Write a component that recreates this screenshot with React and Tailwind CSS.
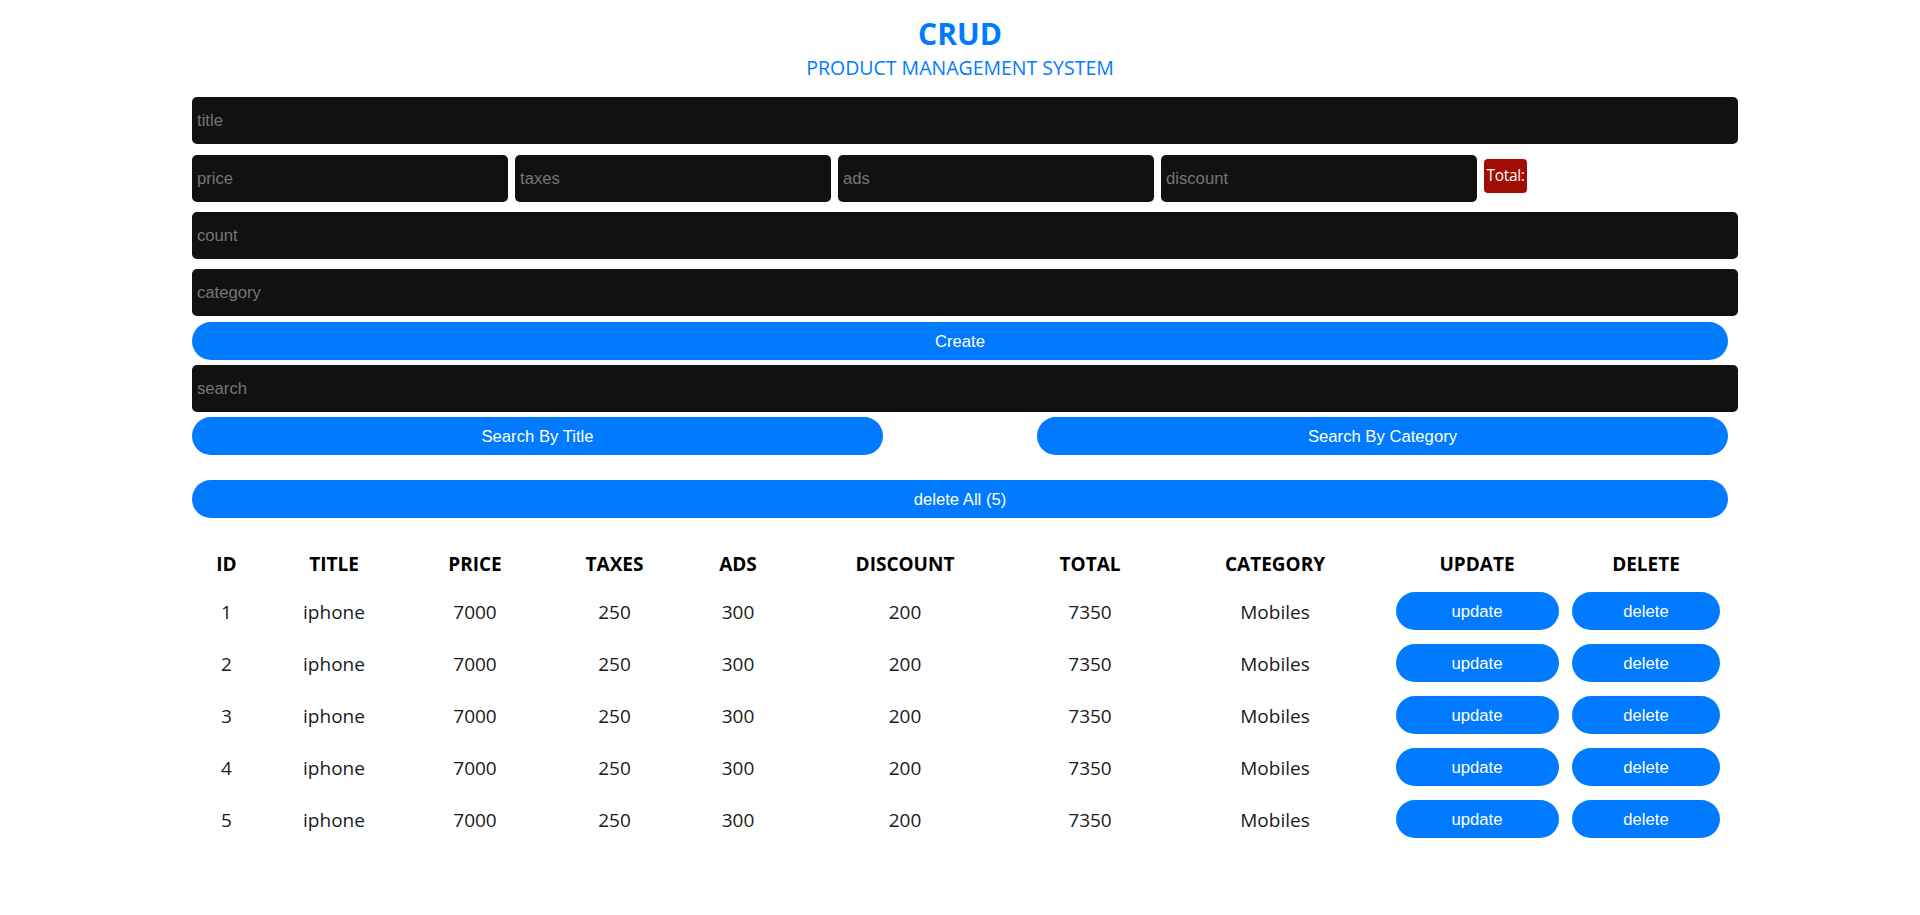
import React from "react";

const rows = [1, 2, 3, 4, 5].map((id) => ({
  id,
  title: "iphone",
  price: 7000,
  taxes: 250,
  ads: 300,
  discount: 200,
  total: 7350,
  category: "Mobiles",
}));

const cols = [
  "w-[69px]",
  "w-[146px]",
  "w-[136px]",
  "w-[143px]",
  "w-[104px]",
  "w-[230px]",
  "w-[140px]",
  "w-[230px]",
  "w-[174px]",
  "w-[164px]",
];

const heads = ["ID", "TITLE", "PRICE", "TAXES", "ADS", "DISCOUNT", "TOTAL", "CATEGORY", "UPDATE", "DELETE"];

function Field({ placeholder, className }) {
  return (
    <input
      placeholder={placeholder}
      className={
        "block h-[47px] rounded-[5px] bg-[#111111] px-[5px] text-[16.67px] text-white outline-none placeholder:text-[#757575] [font-family:'Liberation_Sans',Arial,sans-serif] " +
        className
      }
    />
  );
}

function Btn({ children, className }) {
  return (
    <button
      className={
        "flex h-[38px] items-center justify-center rounded-full bg-[#007bff] text-[16.67px] text-white [font-family:'Liberation_Sans',Arial,sans-serif] " +
        className
      }
    >
      {children}
    </button>
  );
}

export default function App() {
  return (
    <div className="min-h-[915px] bg-white [font-family:'Open_Sans','Noto_Sans',sans-serif]">
      <div className="mx-auto w-[1536px] pt-[14px]">
        <div className="text-center text-[#007bff]">
          <h2 className="h-[40px] text-[30px] font-bold leading-[40px]">CRUD</h2>
          <p className="text-[19.5px] leading-[28px]">PRODUCT MANAGEMENT SYSTEM</p>
        </div>

        <Field placeholder="title" className="mt-[15px] w-[1546px]" />

        <div className="mt-[11px] flex items-start gap-[7px]">
          <Field placeholder="price" className="w-[316px]" />
          <Field placeholder="taxes" className="w-[316px]" />
          <Field placeholder="ads" className="w-[316px]" />
          <Field placeholder="discount" className="w-[316px]" />
          <div className="mt-[4px] flex h-[34px] w-[43px] items-center justify-center rounded-[4px] bg-[#a00d02] text-[15.5px] tracking-[-0.3px] text-white">
            Total:
          </div>
        </div>

        <Field placeholder="count" className="mt-[10px] w-[1546px]" />
        <Field placeholder="category" className="mt-[10px] w-[1546px]" />

        <Btn className="mt-[6px] w-full">Create</Btn>

        <Field placeholder="search" className="mt-[5px] w-[1546px]" />

        <div className="mt-[5px] flex justify-between">
          <Btn className="w-[691px]">Search By Title</Btn>
          <Btn className="w-[691px]">Search By Category</Btn>
        </div>

        <Btn className="mt-[25px] h-[37px] w-full">delete All (5)</Btn>

        <table className="mt-[24px] w-full table-fixed border-collapse text-center text-[19px]">
          <colgroup>
            {cols.map((c, i) => (
              <col key={i} className={c} />
            ))}
          </colgroup>
          <thead>
            <tr className="h-[44px]">
              {heads.map((h) => (
                <th key={h} className="p-0 font-bold text-black">
                  {h}
                </th>
              ))}
            </tr>
          </thead>
          <tbody>
            {rows.map((r) => (
              <tr key={r.id} className="h-[52px] text-[#1a1a1a]">
                <td>{r.id}</td>
                <td>{r.title}</td>
                <td>{r.price}</td>
                <td>{r.taxes}</td>
                <td>{r.ads}</td>
                <td>{r.discount}</td>
                <td>{r.total}</td>
                <td>{r.category}</td>
                <td>
                  <div className="flex justify-center">
                    <Btn className="-mt-[2px] h-[37px] w-[163px]">update</Btn>
                  </div>
                </td>
                <td>
                  <div className="flex justify-center">
                    <Btn className="-mt-[2px] h-[37px] w-[148px]">delete</Btn>
                  </div>
                </td>
              </tr>
            ))}
          </tbody>
        </table>
      </div>
    </div>
  );
}
